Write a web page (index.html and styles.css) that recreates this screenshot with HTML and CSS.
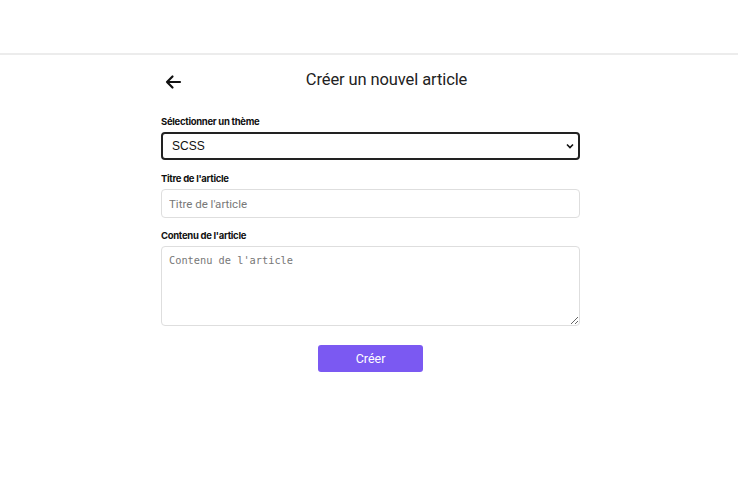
FILE: index.html
```html
<!DOCTYPE html>
<html lang="fr">
<head>
<meta charset="utf-8">
<title>Créer un nouvel article</title>
<link rel="stylesheet" href="styles.css">
</head>
<body>
<header class="topbar"></header>
<main class="page">
  <div class="head">
    <button class="back" aria-label="Retour">
      <svg width="18" height="16" viewBox="0 0 18 16"><path d="M16 8H3M8.5 2.5L3 8l5.5 5.5" fill="none" stroke="#111" stroke-width="2.2" stroke-linecap="round" stroke-linejoin="round"/></svg>
    </button>
    <h1 class="title">Créer un nouvel article</h1>
  </div>
  <form class="form">
    <label class="label" for="theme">Sélectionner un thème</label>
    <div class="select-wrap">
      <select id="theme" class="select"><option>SCSS</option></select>
      <svg class="chev" width="8" height="6" viewBox="0 0 8 6"><path d="M1 1.5l3 3 3-3" fill="none" stroke="#111" stroke-width="1.6"/></svg>
    </div>
    <label class="label" for="titre">Titre de l'article</label>
    <input id="titre" class="input" type="text" placeholder="Titre de l'article">
    <label class="label" for="contenu">Contenu de l'article</label>
    <textarea id="contenu" class="textarea" placeholder="Contenu de l'article"></textarea>
    <div class="actions"><button type="button" class="submit">Créer</button></div>
  </form>
</main>
</body>
</html>
```
FILE: styles.css
```css
* { box-sizing: border-box; }
html, body { margin: 0; padding: 0; background: #fff; }
body { font-family: Roboto, "Liberation Sans", Arial, sans-serif; color: #111; }
.topbar { height: 55px; border-bottom: 2px solid #ececec; background: #fff; }
.page { width: 419px; margin-left: calc(50% - 208px); padding-top: 11px; }
.head { display: flex; align-items: center; height: 26px; }
.back { background: none; border: 0; padding: 0; margin: 6px 0 0 3px; width: 18px; height: 16px; display: flex; cursor: pointer; }
.title { flex: 1; margin: 0 0 0 -21px; text-align: center; font-size: 16.5px; font-weight: 400; color: #222; padding-left: 32px; letter-spacing: -0.1px; }
.form { display: flex; flex-direction: column; margin-top: 24px; }
.label { font-family: Inter, "Liberation Sans", sans-serif; font-size: 9.5px; font-weight: 700; letter-spacing: -0.3px; color: #111; margin-bottom: 5px; }
.select-wrap { position: relative; margin-bottom: 13px; }
.select { width: 100%; height: 28px; border: 2px solid #222; border-radius: 4px; padding: 0 9px; font-family: "Liberation Sans", Arial, sans-serif; font-size: 12px; color: #111; background: #fff; appearance: none; -webkit-appearance: none; }
.chev { position: absolute; right: 6px; top: 11px; }
.input { height: 29px; border: 1px solid #dedede; border-radius: 4px; padding: 0 7px; font-family: Roboto, sans-serif; font-size: 11.5px; margin-bottom: 12px; }
.input::placeholder { color: #777; }
.textarea { height: 80px; border: 1px solid #dedede; border-radius: 4px; padding: 7px 7px; font-family: "DejaVu Sans Mono", "Liberation Mono", monospace; font-size: 10.3px; resize: vertical; }
.textarea::placeholder { color: #777; }
.actions { display: flex; justify-content: center; margin-top: 19px; }
.submit { width: 105px; height: 27px; border: 0; border-radius: 3px; background: #7b59f2; color: #fff; font-family: Roboto, sans-serif; font-size: 12.5px; cursor: pointer; }
```
